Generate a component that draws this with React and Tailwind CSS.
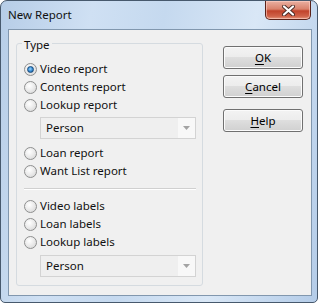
function Radio({ checked, label }) {
  return (
    <div className="h-[18px] flex items-center">
      <span className="w-[13px] h-[13px] shrink-0 rounded-full border border-[#8e8f8f] bg-[radial-gradient(circle_at_40%_35%,#ffffff_0%,#ececec_45%,#d2d2d2_100%)] flex items-center justify-center">
        {checked && (
          <span className="w-[7px] h-[7px] rounded-full border border-[#174a7c] bg-[radial-gradient(circle_at_45%_40%,#9bd6ff_0%,#3a8fd6_50%,#144c85_100%)]" />
        )}
      </span>
      <span className="ml-[3px] whitespace-nowrap">{label}</span>
    </div>
  );
}

function Combo({ className = "" }) {
  return (
    <div className={`ml-[16px] w-[156px] h-[22px] border border-[#d3d3d3] bg-[#efefef] flex ${className}`}>
      <div className="flex-1 pl-[5px] flex items-center">Person</div>
      <div className="w-[17px] bg-[#f8f8f8] flex items-center justify-center">
        <svg width="7" height="4" viewBox="0 0 7 4">
          <path d="M0 0 L7 0 L3.5 4 Z" fill="#a3a3a3" />
        </svg>
      </div>
    </div>
  );
}

function Btn({ u, rest, className = "" }) {
  return (
    <button
      className={`w-[80px] h-[23px] rounded-[3px] border border-[#707070] bg-[linear-gradient(#f3f3f3_0%,#ececec_50%,#dedede_50%,#d0d0d0_100%)] shadow-[inset_0_0_0_1px_#fbfbfb] flex items-center justify-center text-black ${className}`}
    >
      <span>
        <span className="underline underline-offset-[2px]">{u}</span>
        {rest}
      </span>
    </button>
  );
}

export default function App() {
  return (
    <div className="w-[318px] h-[303px] bg-white font-['Noto_Sans',sans-serif] text-[11.5px] leading-[16px] text-[#111]">
      <div className="w-full h-full flex flex-col rounded-t-[7px] rounded-b-[5px] border border-[#47596d] bg-[linear-gradient(100deg,#b6cde7_0%,#cfe0f3_25%,#c5d9ef_45%,#d9e7f6_70%,#c0d5ed_90%,#b4cce8_100%)]">
        <div className="h-[28px] flex items-start">
          <div className="pl-[7px] pt-[6px] text-[#111]">New Report</div>
          <div className="ml-auto mr-[6px] w-[46px] h-[19px] rounded-b-[5px] border border-t-0 border-[#5a2219] bg-[linear-gradient(#eab0a2_0%,#d9826c_45%,#c1432b_55%,#d0634a_85%,#e59a80_100%)] shadow-[inset_0_0_0_1px_rgba(255,210,200,0.6)] flex items-center justify-center">
            <svg width="13" height="11" viewBox="0 0 13 11">
              <path d="M2 1.5 L11 9.5 M11 1.5 L2 9.5" stroke="#4a2a25" strokeWidth="4" strokeLinecap="round" />
              <path d="M2 1.5 L11 9.5 M11 1.5 L2 9.5" stroke="#ffffff" strokeWidth="2.2" strokeLinecap="round" />
            </svg>
          </div>
        </div>
        <div className="flex-1 ml-[7px] mr-[5px] mb-[6px] border border-[#8197ae] bg-[#f0f0f0] flex items-start pt-[3px] pl-[7px]">
          <fieldset className="w-[187px] border border-[#d5dbe0] rounded-[3px] pl-[7px] pr-[6px] pt-[7px] pb-[8px]">
            <legend className="-ml-[2px] px-[2px] pt-[4px]">Type</legend>
            <Radio checked label="Video report" />
            <Radio label="Contents report" />
            <Radio label="Lookup report" />
            <Combo className="mt-[3px]" />
            <div className="mt-[5px]">
              <Radio label="Loan report" />
              <Radio label="Want List report" />
            </div>
            <div className="mt-[8px] border-t border-[#d0d0d0] border-b border-b-white" />
            <div className="mt-[7px]">
              <Radio label="Video labels" />
              <Radio label="Loan labels" />
              <Radio label="Lookup labels" />
            </div>
            <Combo className="mt-[4px]" />
          </fieldset>
          <div className="ml-[20px] mt-[13px] flex flex-col">
            <Btn u="O" rest="K" />
            <Btn u="C" rest="ancel" className="mt-[6px]" />
            <Btn u="H" rest="elp" className="mt-[11px]" />
          </div>
        </div>
      </div>
    </div>
  );
}
